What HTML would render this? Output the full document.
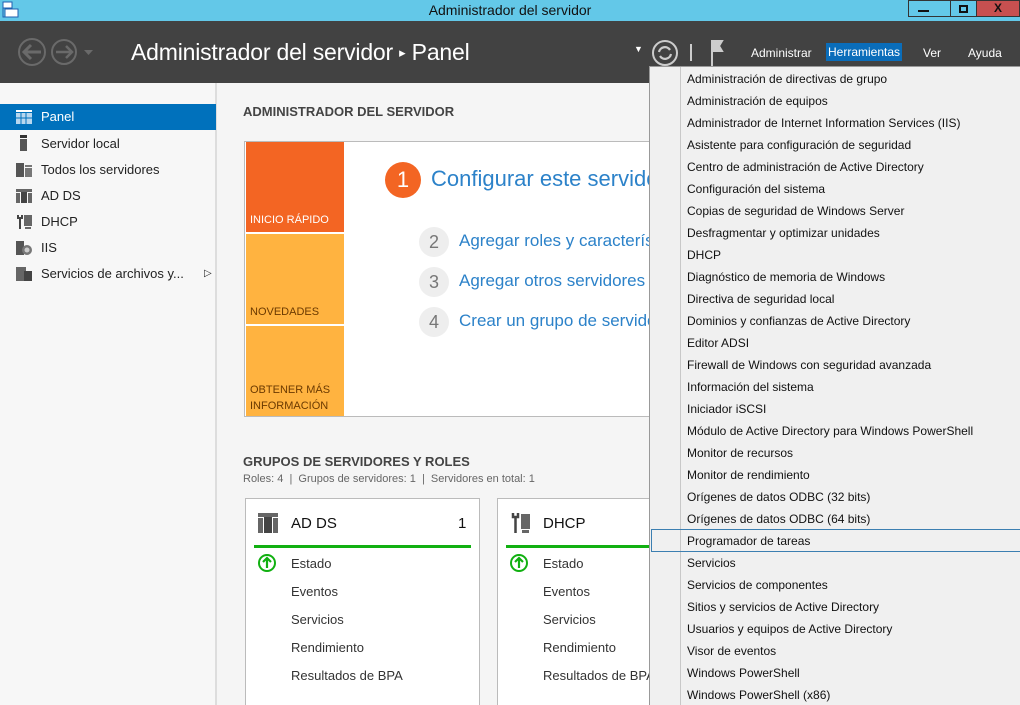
<!DOCTYPE html><html><head><style>
*{margin:0;padding:0;box-sizing:border-box}
html,body{width:1020px;height:705px;overflow:hidden}
body{font-family:"Liberation Sans",sans-serif;background:#f5f5f5;position:relative;color:#222}
.a{position:absolute}
.tb{left:0;top:0;width:1020px;height:21px;background:#63c8e8}
.hd{left:0;top:21px;width:1020px;height:62px;background:#424242}
.side{left:0;top:83px;width:217px;height:622px;background:#f7f7f7;border-right:2px solid #ddd}
.si{position:absolute;left:0;width:216px;height:26px;font-size:13px;line-height:26px;padding-left:41px;color:#222}
.ic{position:absolute;left:16px;top:6px}
.menu{left:649px;top:66px;width:371px;height:639px;background:#f0f0f0;border-left:1px solid #999;border-top:1px solid #999}
.mi{position:absolute;left:37px;font-size:12px;color:#111;height:22px;line-height:22px;white-space:nowrap}
.card{background:#fff;border:1px solid #bbb}
.cl{position:absolute;font-size:13px;color:#333}
</style></head><body>
<div class="a tb"></div>
<svg class="a" style="left:2px;top:1px" width="18" height="18"><rect x="1" y="1" width="9" height="6" fill="#fff" stroke="#1f5fb0"/><rect x="3" y="8" width="13" height="8" fill="#fff" stroke="#1f5fb0"/><path d="M1 7v9h2" fill="none" stroke="#1f5fb0"/></svg>
<div class="a" style="left:0;top:2px;width:1020px;text-align:center;font-size:14px;color:#111">Administrador del servidor</div>
<div class="a" style="left:908px;top:0;width:43px;height:17px;border:1px solid #333;background:#63c8e8"><div class="a" style="left:9px;top:9px;width:11px;height:2px;background:#111"></div></div>
<div class="a" style="left:950px;top:0;width:27px;height:17px;border:1px solid #333;background:#63c8e8"><div class="a" style="left:8px;top:4px;width:9px;height:8px;border:2px solid #111"></div></div>
<div class="a" style="left:976px;top:0;width:44px;height:17px;background:#c75050;border:1px solid #333;color:#111;font-weight:bold;text-align:center;font-size:12px;line-height:15px">X</div>
<div class="a hd"></div>
<svg class="a" style="left:10px;top:32px" width="90" height="40"><circle cx="22" cy="20" r="13" fill="none" stroke="#6a6a6a" stroke-width="2"/><path d="M31 20H14M21 13l-7 7 7 7" fill="none" stroke="#6a6a6a" stroke-width="3"/><circle cx="54" cy="20" r="12" fill="none" stroke="#6a6a6a" stroke-width="2"/><path d="M46 20h15M56 14l6 6-6 6" fill="none" stroke="#6a6a6a" stroke-width="2.5"/><path d="M74 18h9l-4.5 5z" fill="#6a6a6a"/></svg>
<div class="a" style="left:131px;top:39px;font-size:23px;color:#fff;letter-spacing:-0.2px">Administrador del servidor <span style="font-size:13px;position:relative;top:-3px">▸</span> Panel</div>
<div class="a" style="left:634px;top:44px;color:#fff;font-size:9px">▼</div>
<svg class="a" style="left:652px;top:40px" width="80" height="28"><circle cx="13" cy="13" r="12" fill="none" stroke="#ccc" stroke-width="2"/><path d="M7 12a6 6 0 0 1 11-2M19 14a6 6 0 0 1-11 2" fill="none" stroke="#ccc" stroke-width="2.2"/><rect x="38" y="4" width="2" height="17" fill="#ccc"/><path d="M60 0v28M60 1h10l-3 5 3 5h-10" fill="#ccc" stroke="#ccc" stroke-width="2"/></svg>
<div class="a" style="left:751px;top:46px;font-size:12px;color:#fff">Administrar</div>
<div class="a" style="left:826px;top:43px;height:18px;padding:2px 2px;background:#0a6dba;font-size:12px;color:#fff">Herramientas</div>
<div class="a" style="left:923px;top:46px;font-size:12px;color:#fff">Ver</div>
<div class="a" style="left:968px;top:46px;font-size:12px;color:#fff">Ayuda</div>

<div class="a side">
<div class="si" style="top:21px;background:#0071bc;color:#fff"><svg class="ic" width="16" height="14"><rect width="16" height="2" fill="#fff"/><rect y="3" width="16" height="11" fill="#b8d7ef"/><path d="M5 3v11M10 3v11M0 8h16" stroke="#0071bc"/></svg>Panel</div>
<div class="si" style="top:48px"><svg class="ic" width="16" height="16" style="top:4px"><rect x="4" y="0" width="7" height="3" fill="#333"/><rect x="4" y="4" width="7" height="12" fill="#555"/></svg>Servidor local</div>
<div class="si" style="top:74px"><svg class="ic" width="16" height="14"><rect x="0" y="0" width="8" height="14" fill="#555"/><rect x="9" y="2" width="7" height="2" fill="#777"/><rect x="9" y="5" width="7" height="9" fill="#777"/></svg>Todos los servidores</div>
<div class="si" style="top:100px"><svg class="ic" width="16" height="14"><rect x="0" y="0" width="16" height="3" fill="#666"/><rect x="0" y="4" width="4" height="10" fill="#666"/><rect x="12" y="4" width="4" height="10" fill="#666"/><rect x="5" y="3" width="6" height="11" fill="#444"/></svg>AD DS</div>
<div class="si" style="top:126px"><svg class="ic" width="16" height="14"><path d="M2 0v3h4V0M4 3v11" stroke="#444" stroke-width="2" fill="none"/><rect x="8" y="0" width="8" height="11" fill="#666"/><rect x="9" y="12" width="6" height="2" fill="#666"/></svg>DHCP</div>
<div class="si" style="top:152px"><svg class="ic" width="16" height="14"><rect x="0" y="0" width="8" height="14" fill="#555"/><circle cx="11" cy="9" r="5" fill="#777"/><circle cx="11" cy="9" r="2.5" fill="#ccc"/></svg>IIS</div>
<div class="si" style="top:178px"><svg class="ic" width="16" height="14"><rect x="0" y="0" width="10" height="14" fill="#666"/><rect x="8" y="4" width="8" height="10" fill="#444"/></svg>Servicios de archivos y...<span style="position:absolute;left:204px;font-size:10px">▷</span></div>
</div>

<div class="a" style="left:243px;top:104px;font-size:13px;font-weight:bold;color:#444">ADMINISTRADOR DEL SERVIDOR</div>
<div class="a card" style="left:244px;top:141px;width:420px;height:276px"></div>
<div class="a" style="left:246px;top:142px;width:98px;height:90px;background:#f36523"></div>
<div class="a" style="left:250px;top:214px;font-size:11px;color:#fff">INICIO RÁPIDO</div>
<div class="a" style="left:246px;top:234px;width:98px;height:90px;background:#ffb340"></div>
<div class="a" style="left:250px;top:306px;font-size:11px;color:#6b3a00">NOVEDADES</div>
<div class="a" style="left:246px;top:326px;width:98px;height:90px;background:#ffb340"></div>
<div class="a" style="left:250px;top:382px;font-size:11px;color:#6b3a00;line-height:16px">OBTENER MÁS<br>INFORMACIÓN</div>
<div class="a" style="left:385px;top:162px;width:36px;height:36px;border-radius:50%;background:#f36523;color:#fff;font-size:22px;text-align:center;line-height:36px">1</div>
<div class="a" style="left:431px;top:166px;font-size:22px;color:#2c82c9;white-space:nowrap;width:219px;overflow:hidden">Configurar este servidor local</div>
<div class="a" style="left:419px;top:227px;width:30px;height:30px;border-radius:50%;background:#eee;color:#777;font-size:18px;text-align:center;line-height:30px">2</div>
<div class="a" style="left:459px;top:231px;font-size:17px;color:#2c82c9;white-space:nowrap;width:191px;overflow:hidden">Agregar roles y características</div>
<div class="a" style="left:419px;top:267px;width:30px;height:30px;border-radius:50%;background:#eee;color:#777;font-size:18px;text-align:center;line-height:30px">3</div>
<div class="a" style="left:459px;top:271px;font-size:17px;color:#2c82c9;white-space:nowrap;width:191px;overflow:hidden">Agregar otros servidores</div>
<div class="a" style="left:419px;top:307px;width:30px;height:30px;border-radius:50%;background:#eee;color:#777;font-size:18px;text-align:center;line-height:30px">4</div>
<div class="a" style="left:459px;top:311px;font-size:17px;color:#2c82c9;white-space:nowrap;width:191px;overflow:hidden">Crear un grupo de servidores</div>

<div class="a" style="left:243px;top:454px;font-size:13px;font-weight:bold;color:#444">GRUPOS DE SERVIDORES Y ROLES</div>
<div class="a" style="left:243px;top:473px;font-size:11px;color:#666">Roles: 4 &nbsp;| &nbsp;Grupos de servidores: 1 &nbsp;| &nbsp;Servidores en total: 1</div>

<div class="a card" style="left:245px;top:498px;width:235px;height:220px"></div>
<svg class="a" style="left:258px;top:513px" width="20" height="20"><rect x="0" y="0" width="20" height="4" fill="#666"/><rect x="0" y="5" width="5" height="15" fill="#666"/><rect x="15" y="5" width="5" height="15" fill="#666"/><rect x="6" y="4" width="8" height="16" fill="#444"/></svg>
<div class="a" style="left:291px;top:515px;font-size:15px;color:#111">AD DS</div>
<div class="a" style="left:458px;top:515px;font-size:15px;color:#111">1</div>
<div class="a" style="left:254px;top:545px;width:217px;height:3px;background:#11b011"></div>
<div class="a card" style="left:497px;top:498px;width:170px;height:220px"></div>
<svg class="a" style="left:510px;top:513px" width="20" height="20"><path d="M3 0v4h5V0M5.5 4v16" stroke="#444" stroke-width="2.5" fill="none"/><rect x="11" y="1" width="9" height="15" fill="#666"/><rect x="12" y="17" width="7" height="3" fill="#666"/></svg>
<div class="a" style="left:543px;top:515px;font-size:15px;color:#111">DHCP</div>
<div class="a" style="left:506px;top:545px;width:150px;height:3px;background:#11b011"></div>
<svg class="a" style="left:257px;top:553px" width="20" height="20"><circle cx="10" cy="10" r="8" fill="none" stroke="#11b011" stroke-width="2"/><path d="M10 15V6M6 9l4-4 4 4" fill="none" stroke="#11b011" stroke-width="2.2"/></svg>
<svg class="a" style="left:509px;top:553px" width="20" height="20"><circle cx="10" cy="10" r="8" fill="none" stroke="#11b011" stroke-width="2"/><path d="M10 15V6M6 9l4-4 4 4" fill="none" stroke="#11b011" stroke-width="2.2"/></svg>
<div class="cl" style="left:291px;top:556px">Estado</div><div class="cl" style="left:291px;top:584px">Eventos</div><div class="cl" style="left:291px;top:612px">Servicios</div><div class="cl" style="left:291px;top:640px">Rendimiento</div><div class="cl" style="left:291px;top:668px">Resultados de BPA</div>
<div class="cl" style="left:543px;top:556px">Estado</div><div class="cl" style="left:543px;top:584px">Eventos</div><div class="cl" style="left:543px;top:612px">Servicios</div><div class="cl" style="left:543px;top:640px">Rendimiento</div><div class="cl" style="left:543px;top:668px;width:106px;overflow:hidden;white-space:nowrap">Resultados de BPA</div>

<div class="a menu">
<div class="a" style="left:30px;top:0;width:1px;height:639px;background:#c8c8c8"></div>
<div class="a" style="left:1px;top:462px;width:370px;height:23px;border:1px solid #3c7fb1"></div>
<div class="mi" style="top:1px">Administración de directivas de grupo</div>
<div class="mi" style="top:23px">Administración de equipos</div>
<div class="mi" style="top:45px">Administrador de Internet Information Services (IIS)</div>
<div class="mi" style="top:67px">Asistente para configuración de seguridad</div>
<div class="mi" style="top:89px">Centro de administración de Active Directory</div>
<div class="mi" style="top:111px">Configuración del sistema</div>
<div class="mi" style="top:133px">Copias de seguridad de Windows Server</div>
<div class="mi" style="top:155px">Desfragmentar y optimizar unidades</div>
<div class="mi" style="top:177px">DHCP</div>
<div class="mi" style="top:199px">Diagnóstico de memoria de Windows</div>
<div class="mi" style="top:221px">Directiva de seguridad local</div>
<div class="mi" style="top:243px">Dominios y confianzas de Active Directory</div>
<div class="mi" style="top:265px">Editor ADSI</div>
<div class="mi" style="top:287px">Firewall de Windows con seguridad avanzada</div>
<div class="mi" style="top:309px">Información del sistema</div>
<div class="mi" style="top:331px">Iniciador iSCSI</div>
<div class="mi" style="top:353px">Módulo de Active Directory para Windows PowerShell</div>
<div class="mi" style="top:375px">Monitor de recursos</div>
<div class="mi" style="top:397px">Monitor de rendimiento</div>
<div class="mi" style="top:419px">Orígenes de datos ODBC (32 bits)</div>
<div class="mi" style="top:441px">Orígenes de datos ODBC (64 bits)</div>
<div class="mi" style="top:463px">Programador de tareas</div>
<div class="mi" style="top:485px">Servicios</div>
<div class="mi" style="top:507px">Servicios de componentes</div>
<div class="mi" style="top:529px">Sitios y servicios de Active Directory</div>
<div class="mi" style="top:551px">Usuarios y equipos de Active Directory</div>
<div class="mi" style="top:573px">Visor de eventos</div>
<div class="mi" style="top:595px">Windows PowerShell</div>
<div class="mi" style="top:617px">Windows PowerShell (x86)</div>
</div>
</body></html>
